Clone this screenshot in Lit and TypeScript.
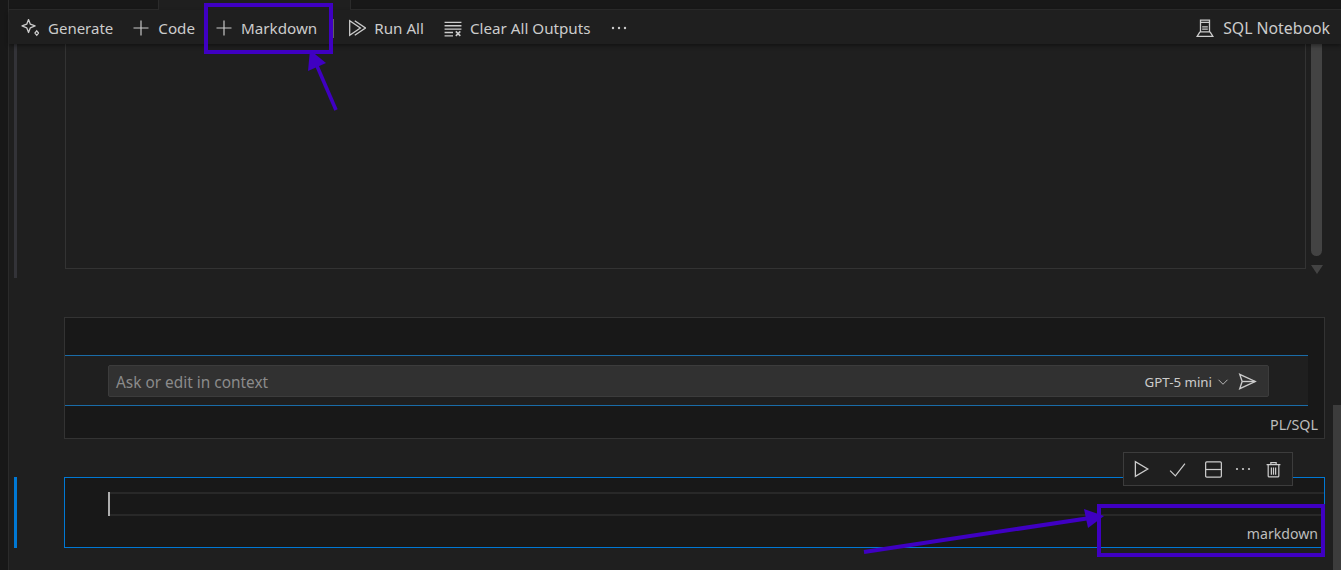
import { LitElement, html, svg, css } from "lit";
import { customElement } from "lit/decorators.js";

const ic = (size: number, body: unknown) => html`<svg class="ic" width=${size} height=${size} viewBox="0 0 16 16" fill="none" stroke="currentColor" stroke-width="1.15">${body}</svg>`;
const plus = svg`<path d="M8 0.5V15.5M0.5 8H15.5"/>`;

@customElement("app-root")
export class AppRoot extends LitElement {
  static styles = css`
    :host { display: block; position: relative; width: 1341px; height: 570px; overflow: hidden; background: #1f1f1f; color: #cccccc; font-family: "Noto Sans", "Open Sans", sans-serif; font-size: 15.2px; }
    .app { display: flex; height: 570px; }
    .strip { width: 8px; background: #181818; border-right: 1px solid #2b2b2b; flex: none; }
    .main { flex: 1; min-width: 0; display: flex; flex-direction: column; }
    .tabs { height: 10px; background: #181818; display: flex; flex: none; }
    .tabs .t1 { width: 149px; border-bottom: 1px solid #2b2b2b; }
    .tabs .active { width: 191px; background: #1f1f1f; border-left: 1px solid #2b2b2b; border-right: 1px solid #2b2b2b; }
    .tabs .t2 { flex: 1; border-bottom: 1px solid #2b2b2b; }
    .toolbar { height: 34px; box-sizing: border-box; flex: none; display: flex; align-items: center; padding: 2px 11px 0 12px; background: #1f1f1f; box-shadow: 0 2px 4px rgba(0,0,0,.4); position: relative; z-index: 1; }
    .tool { display: flex; align-items: center; gap: 9px; white-space: nowrap; margin-right: 19px; }
    .tool.gen { font-size: 15px; margin-right: 20px; }
    .tool.code { margin-right: 21px; }
    .tool.md { margin-right: 16px; }
    .tool.run { margin-right: 20px; gap: 8px; }
    .tool.clr { margin-right: 21px; gap: 8px; }
    .tool.sql { margin: 0 0 0 auto; gap: 9px; font-size: 15.8px; }
    .sep { width: 1px; height: 19px; background: #616161; margin-right: 14px; }
    .ic { flex: none; display: block; }
    .content { flex: 1; min-height: 0; }
    .row { display: flex; align-items: flex-start; }
    .bar { width: 3px; margin-left: 5px; flex: none; background: #333338; }
    .r1 { height: 234px; }
    .r1 .bar { height: 234px; }
    .out { margin-left: 48px; width: 1241px; height: 225px; border: 1px solid #333; border-top: 0; box-sizing: border-box; flex: none; }
    .vscroll { margin-left: 5px; width: 11px; flex: none; display: flex; flex-direction: column; align-items: center; }
    .thumb { width: 11px; height: 212px; background: #434343; border-radius: 0 0 6px 6px; }
    .arrow { margin-top: 9px; width: 0; height: 0; border-left: 6px solid transparent; border-right: 6px solid transparent; border-top: 9px solid #434343; }
    .cell { margin-left: 47px; width: 1261px; box-sizing: border-box; background: #181818; flex: none; }
    .c2 { margin-top: 39px; margin-left: 55px; height: 122px; border: 1px solid #333; }
    .c2 .top { height: 37px; border-bottom: 1px solid #1a6ca8; width: 1243px; box-sizing: content-box; }
    .c2 .mid { width: 1243px; height: 50px; background: #1f1f1f; border-bottom: 1px solid #1a6ca8; padding: 9px 39px 0 43px; box-sizing: border-box; }
    .input { height: 32px; background: #313131; border: 1px solid #3c3c3c; border-radius: 2px; display: flex; align-items: center; padding: 2px 11px 0 7px; box-sizing: border-box; font-size: 15.4px; color: #8b8b8b; }
    .input .model { margin-left: auto; color: #cccccc; font-size: 13.3px; display: flex; align-items: center; gap: 5px; }
    .input .send { margin-left: 9px; color: #cccccc; margin-top: -2px; }
    .lang { text-align: right; padding: 9px 6px 0 0; font-size: 14.3px; line-height: 20px; color: #bdbdbd; }
    .r3 { margin-top: 38px; position: relative; }
    .r3 .bar { height: 71px; background: #0078d4; }
    .c3 { margin-left: 47px; height: 71px; border: 1px solid #0078d4; padding-top: 14px; }
    .editor { margin-left: 43px; height: 24px; box-sizing: border-box; border-top: 2px solid #282828; border-bottom: 2px solid #282828; position: relative; }
    .cursor { position: absolute; left: 0; top: -2px; width: 2px; height: 24px; background: #aeaeae; }
    .c3 .lang { padding-top: 8px; font-size: 14.1px; }
    .celltools { position: absolute; left: 1114px; top: -25px; width: 170px; height: 34px; box-sizing: border-box; background: #1f1f1f; border: 1px solid #3c3c3c; display: flex; align-items: center; padding-left: 8px; gap: 19px; }
    .celltools .dots { margin-left: -6px; }
    .celltools .trash { margin-left: -5px; }
    .outer-scroll { position: absolute; left: 1333px; top: 405px; width: 8px; height: 165px; background: #3c3c3c; }
    .note { position: absolute; left: 0; top: 0; pointer-events: none; z-index: 5; }
  `;

  render() {
    return html`
      <div class="app">
        <div class="strip"></div>
        <div class="main">
          <div class="tabs"><div class="t1"></div><div class="active"></div><div class="t2"></div></div>
          <div class="toolbar">
            <div class="tool gen">${ic(18, svg`<path d="M6.7 0.5L8.3 4.6L12.5 6.2L8.3 7.8L6.7 12L5.1 7.8L0.9 6.2L5.1 4.6Z" stroke-linejoin="round"/><path d="M14 10.5L15.6 12.5L14 14.5L12.4 12.5Z"/>`)}<span>Generate</span></div>
            <div class="tool code">${ic(16, plus)}<span>Code</span></div>
            <div class="tool md">${ic(16, plus)}<span>Markdown</span></div>
            <div class="sep"></div>
            <div class="tool run">${ic(18, svg`<path d="M1.5 1.5V14.5L11 8Z"/><path d="M6 1.5L15.5 8L6 14.5"/>`)}<span>Run All</span></div>
            <div class="tool clr">${ic(18, svg`<path d="M0.5 3H15.5M0.5 6H15.5M0.5 9H15.5M0.5 12H8M0.5 15H8"/><path d="M10.5 11L14.5 15M14.5 11L10.5 15" stroke-width="1.4"/>`)}<span>Clear All Outputs</span></div>
            <div class="tool">${ic(16, svg`<g fill="currentColor" stroke="none"><circle cx="2" cy="8" r="1.2"/><circle cx="8" cy="8" r="1.2"/><circle cx="14" cy="8" r="1.2"/></g>`)}</div>
            <div class="tool sql">${ic(18, svg`<path d="M4 1H12V11.5H4Z"/><path d="M4 3H12M5.5 9H10.5M5.5 7H10.5"/><path d="M3.5 11.5L1 15.5H15L12.5 11.5"/>`)}<span>SQL Notebook</span></div>
          </div>
          <div class="content">
            <div class="row r1">
              <div class="bar"></div>
              <div class="out"></div>
              <div class="vscroll"><div class="thumb"></div><div class="arrow"></div></div>
            </div>
            <div class="cell c2">
              <div class="top"></div>
              <div class="mid">
                <div class="input">
                  <span>Ask or edit in context</span>
                  <span class="model">GPT-5 mini ${ic(12, svg`<path d="M2 5L8 11L14 5"/>`)}</span>
                  <span class="send">${ic(19, svg`<path d="M1.5 2L14.5 8L1.5 14L3.5 8Z"/><path d="M3.5 8H14.5"/>`)}</span>
                </div>
              </div>
              <div class="lang">PL/SQL</div>
            </div>
            <div class="row r3">
              <div class="bar"></div>
              <div class="cell c3">
                <div class="editor"><div class="cursor"></div></div>
                <div class="lang">markdown</div>
              </div>
              <div class="celltools">
                ${ic(18, svg`<path d="M3 1.5V14.5L14 8Z"/>`)}
                ${ic(17, svg`<path d="M1 9L6 14L15 2.5"/>`)}
                ${ic(17, svg`<rect x="0.6" y="0.8" width="14.8" height="14.4" rx="1"/><path d="M0.6 8H15.4"/>`)}
                <span class="dots">${ic(16, svg`<g fill="currentColor" stroke="none"><circle cx="2" cy="8" r="1.1"/><circle cx="8" cy="8" r="1.1"/><circle cx="14" cy="8" r="1.1"/></g>`)}</span>
                <span class="trash">${ic(17, svg`<path d="M1.5 3.5H14.5M5.5 3.5V1.5H10.5V3.5M3 3.5V14C3 14.8 3.5 15 4 15H12C12.5 15 13 14.8 13 14V3.5M6 6V13M8 6V13M10 6V13"/>`)}</span>
              </div>
            </div>
          </div>
        </div>
      </div>
      <div class="outer-scroll"></div>
      <svg class="note" width="1341" height="570" viewBox="0 0 1341 570" fill="none" stroke="#3f00c2">
        <rect x="206" y="5" width="125" height="47" stroke-width="4"/>
        <rect x="1099" y="506" width="224" height="49" stroke-width="4"/>
        <path d="M336 110L317 66" stroke-width="3.6"/>
        <path d="M310 50L326 63L308 71Z" fill="#3f00c2" stroke="none"/>
        <path d="M864 552L1090 518" stroke-width="4"/>
        <path d="M1104 516L1084 509L1088 528Z" fill="#3f00c2" stroke="none"/>
      </svg>
    `;
  }
}
